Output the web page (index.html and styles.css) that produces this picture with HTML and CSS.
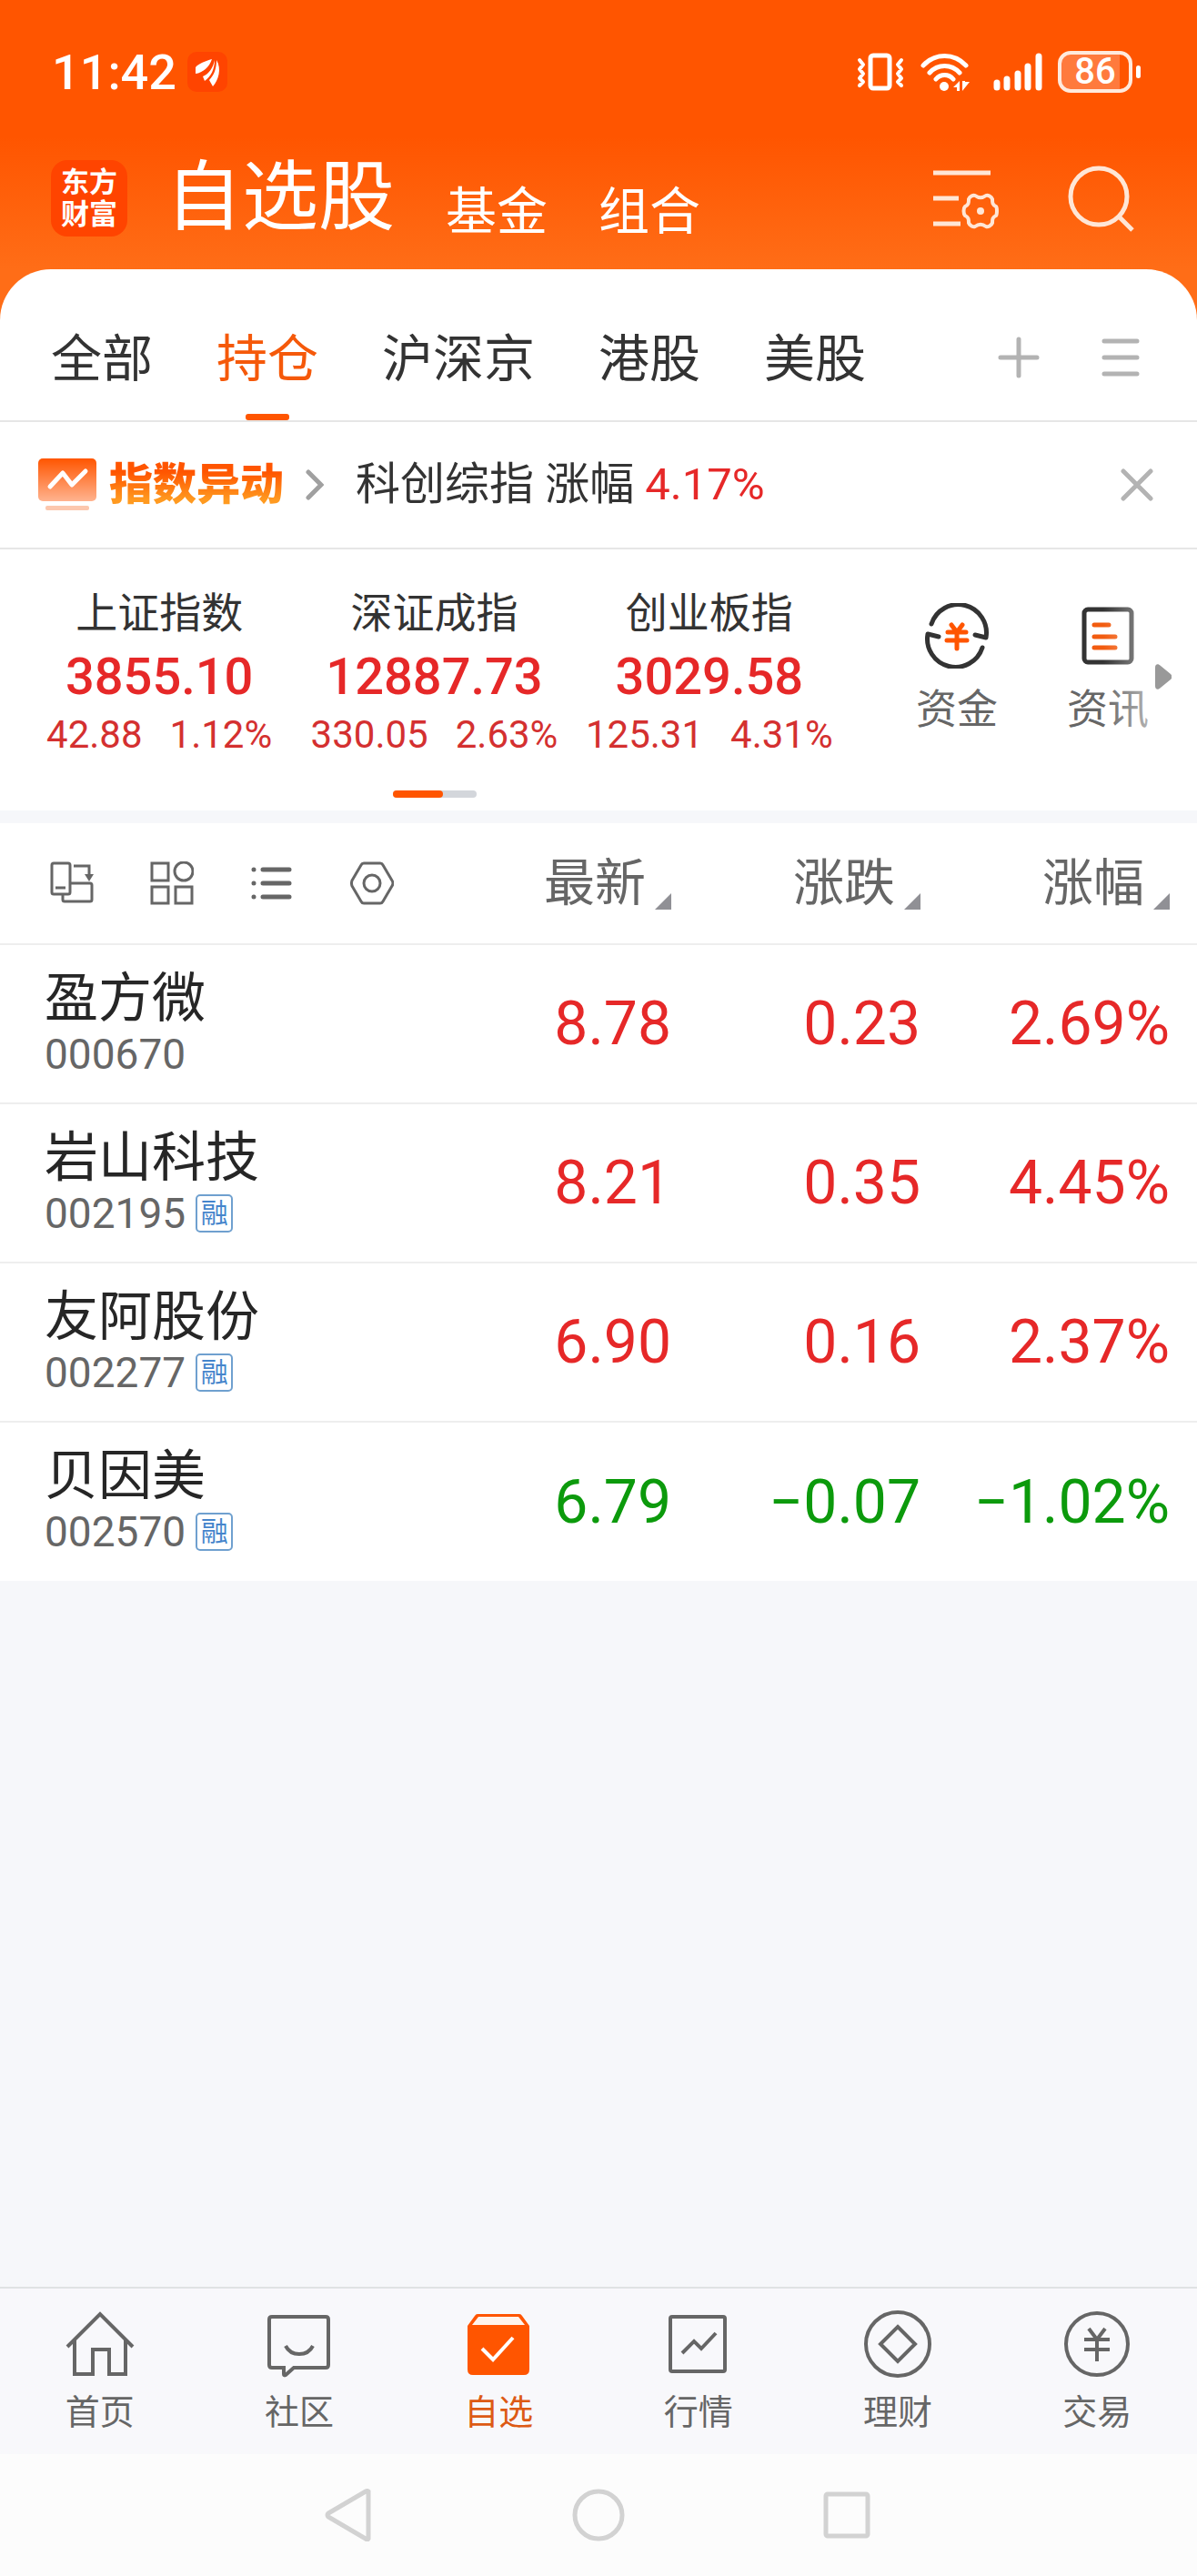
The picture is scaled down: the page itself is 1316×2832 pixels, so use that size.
FILE: index.html
```html
<!DOCTYPE html>
<html lang="zh-CN">
<head>
  <meta charset="UTF-8" />
  <meta name="viewport" content="width=device-width, initial-scale=1.0">
  <title>自选股</title>
  <link rel="stylesheet" href="styles.css">
</head>
<body>

<header class="top">
  <div class="status">
    <span class="time">11:42</span>
    <svg class="app-mark" width="44" height="44" viewBox="0 0 44 44">
      <rect width="44" height="44" rx="10" fill="#ff4400"/>
      <path fill="#fff" d="M27 8C20 10 12 13 9 17v7c8-1 15-7 18-16zM30 9c-2 9-6 15-13 18l2 5c7-5 11-13 11-23zM32 9c0 10-3 17-8 22l4 7c6-7 10-19 4-29z"/>
    </svg>
    <div class="status-icons">
      <svg width="52" height="44" viewBox="0 0 52 44" fill="none" stroke="#fff" stroke-width="5" stroke-linecap="round" stroke-linejoin="round">
        <rect x="15" y="4" width="21" height="36" rx="3"/>
        <path stroke-width="4" d="M3 9l4 5-4 5 4 5-4 5 4 4-4 4M49 9l-4 5 4 5-4 5 4 5-4 4 4 4"/>
      </svg>
      <svg width="56" height="44" viewBox="0 0 56 44" fill="none" stroke="#fff" stroke-width="5" stroke-linecap="round">
        <path d="M4 15c13-14 34-14 47 0M11 23c9-10 24-10 33 0M18 30c5-6 14-6 19 0"/>
        <circle cx="27" cy="38" r="5" fill="#fff" stroke="none"/>
        <path fill="#fff" stroke="none" d="M44 32v11h-3v-4h-4zM47 32v11l8-10h-5v-1z"/>
      </svg>
      <svg class="signal" width="54" height="44" viewBox="0 0 54 44" stroke="#fff" stroke-width="7" stroke-linecap="round">
        <path d="M4 34v5M15 30v9M27 24v15M38 16v23M50 5v34"/>
      </svg>
      <span class="battery">86</span>
    </div>
  </div>

  <div class="app-bar">
    <div class="logo">东方<br>财富</div>
    <nav class="sections">
      <a class="current" href="#">自选股</a>
      <a href="#">基金</a>
      <a href="#">组合</a>
    </nav>
    <button class="icon-btn" aria-label="管理">
      <svg width="74" height="72" viewBox="0 0 74 72" fill="none" stroke="#ffe6d6" stroke-width="5" stroke-linejoin="round">
        <path d="M0 8h63M0 36h28M0 64h30"/>
        <path stroke-width="4" d="M70 50c0 3 0 4-1 5-4 2-4 4-4 8-1 3-5 5-7 4-4-3-8-3-12 0-2 1-6-1-7-4 0-4 0-6-4-8-2-2-2-8 0-10 4-2 4-4 4-8 1-3 5-5 7-4 4 3 8 3 12 0 2-1 6 1 7 4 0 4 0 6 4 8 1 1 1 2 1 5z"/>
        <circle cx="52" cy="50" r="4" fill="#ffe6d6" stroke="none"/>
      </svg>
    </button>
    <button class="icon-btn" aria-label="搜索">
      <svg width="74" height="74" viewBox="0 0 74 74" fill="none" stroke="#ffe6d6" stroke-width="5">
        <circle cx="34" cy="35" r="31"/>
        <path d="M56 57l15 15"/>
      </svg>
    </button>
  </div>

  <div class="tabs">
    <nav>
      <a href="#">全部</a>
      <a class="active" href="#">持仓</a>
      <a href="#">沪深京</a>
      <a href="#">港股</a>
      <a href="#">美股</a>
    </nav>
    <button class="icon-btn" aria-label="添加">
      <svg width="46" height="46" viewBox="0 0 46 46" stroke="#b3b3b3" stroke-width="5" stroke-linecap="round"><path d="M3 23h40M23 3v40"/></svg>
    </button>
    <button class="icon-btn" aria-label="菜单">
      <svg width="42" height="46" viewBox="0 0 42 46" stroke="#b3b3b3" stroke-width="5" stroke-linecap="round"><path d="M3 5h36M3 23h36M3 41h36"/></svg>
    </button>
  </div>
</header>

<section class="notice">
  <svg width="64" height="58" viewBox="0 0 64 58">
    <defs>
      <linearGradient id="card" x1="0" y1="0" x2="0" y2="1">
        <stop offset="0" stop-color="#ff5500"/>
        <stop offset="1" stop-color="#ffb38f"/>
      </linearGradient>
    </defs>
    <rect width="64" height="47" rx="5" fill="url(#card)"/>
    <path d="M13 31l14-15 10 13 15-15" fill="none" stroke="#fff" stroke-width="5" stroke-linecap="round" stroke-linejoin="round"/>
    <rect x="8" y="52" width="48" height="5" rx="2" fill="#fcc7ad"/>
  </svg>
  <strong>指数异动</strong>
  <svg class="chevron" width="20" height="34" viewBox="0 0 20 34" fill="none" stroke="#a0a0a0" stroke-width="5" stroke-linecap="round"><path d="M3 3l14 14L3 31"/></svg>
  <p>科创综指 涨幅 <span class="up">4.17%</span></p>
  <button class="icon-btn" aria-label="关闭">
    <svg width="36" height="36" viewBox="0 0 36 36" stroke="#b3b3b3" stroke-width="5" stroke-linecap="round"><path d="M3 3l30 30M33 3L3 33"/></svg>
  </button>
</section>

<section class="market">
  <div class="indices">
    <div class="index">
      <h2>上证指数</h2>
      <b>3855.10</b>
      <p><span>42.88</span><span>1.12%</span></p>
    </div>
    <div class="index">
      <h2>深证成指</h2>
      <b>12887.73</b>
      <p><span>330.05</span><span>2.63%</span></p>
    </div>
    <div class="index">
      <h2>创业板指</h2>
      <b>3029.58</b>
      <p><span>125.31</span><span>4.31%</span></p>
    </div>
    <div class="pager"><i></i></div>
  </div>
  <div class="shortcuts">
    <a href="#">
      <svg width="72" height="72" viewBox="-36 -36 72 72" fill="none" stroke="#333" stroke-width="5" stroke-linecap="round" stroke-linejoin="round">
        <path d="M-28-13A31 31 0 0 1 32 2L20-1M28 13A31 31 0 0 1-32-2L-20 1"/>
        <path stroke="#ff5500" d="M-6-12l6 8 6-8M-10-4h20M-11 5h22M0-4v18"/>
      </svg>
      资金
    </a>
    <a href="#">
      <svg width="72" height="72" viewBox="-36 -36 72 72" fill="none" stroke="#333" stroke-width="5" stroke-linecap="round">
        <rect x="-26" y="-29" width="52" height="58" rx="4"/>
        <path stroke="#f25c10" d="M-15-12H1M-15 1H8M-15 13H8"/>
      </svg>
      资讯
    </a>
  </div>
  <svg class="more" width="18" height="28" viewBox="0 0 18 28"><path fill="#999" d="M0 4c0-4 3-5 6-2l11 9c2 2 2 4 0 6L6 26c-3 3-6 2-6-2z"/></svg>
</section>

<main>
  <table class="quotes">
    <thead>
      <tr>
        <th>
          <div class="tools">
            <button class="icon-btn" aria-label="横屏">
              <svg width="48" height="48" viewBox="0 0 48 48" fill="none" stroke="#666" stroke-width="3">
                <rect x="2" y="2" width="20" height="34" rx="2"/><path d="M6 29h11M26 5h17v12M14 37v5q0 2 2 2h28q2 0 2-2V26q0-2-2-2H23"/>
                <path fill="#666" stroke="none" d="M38 14h10l-5 8z"/>
              </svg>
            </button>
            <button class="icon-btn" aria-label="宫格">
              <svg width="48" height="48" viewBox="0 0 48 48" fill="none" stroke="#666" stroke-width="3">
                <rect x="2" y="2" width="18" height="19"/><circle cx="37" cy="11" r="10"/><rect x="2" y="28" width="18" height="18"/><rect x="28" y="28" width="18" height="18"/>
              </svg>
            </button>
            <button class="icon-btn" aria-label="列表">
              <svg width="48" height="48" viewBox="0 0 48 48" stroke="#666" stroke-width="5" stroke-linecap="round">
                <path d="M4 9h0M4 24h0M4 39h0M14 9h29M14 24h29M14 39h29"/>
              </svg>
            </button>
            <button class="icon-btn" aria-label="设置">
              <svg width="48" height="48" viewBox="0 0 48 48" fill="none" stroke="#666" stroke-width="3" stroke-linejoin="round">
                <path d="M15 2h18q2 0 3 2l10 17q2 3 0 6L36 44q-1 2-3 2H15q-2 0-3-2L2 27q-1-3 0-6L12 4q1-2 3-2z"/><circle cx="24" cy="24" r="9"/>
              </svg>
            </button>
          </div>
        </th>
        <th class="num"><button class="sort">最新</button></th>
        <th class="num"><button class="sort">涨跌</button></th>
        <th class="num last"><button class="sort">涨幅</button></th>
      </tr>
    </thead>
    <tbody>
      <tr>
        <td><div class="name">盈方微</div><div class="code">000670</div></td>
        <td class="num up">8.78</td><td class="num up">0.23</td><td class="num last up">2.69%</td>
      </tr>
      <tr>
        <td><div class="name">岩山科技</div><div class="code">002195<span class="tag">融</span></div></td>
        <td class="num up">8.21</td><td class="num up">0.35</td><td class="num last up">4.45%</td>
      </tr>
      <tr>
        <td><div class="name">友阿股份</div><div class="code">002277<span class="tag">融</span></div></td>
        <td class="num up">6.90</td><td class="num up">0.16</td><td class="num last up">2.37%</td>
      </tr>
      <tr>
        <td><div class="name">贝因美</div><div class="code">002570<span class="tag">融</span></div></td>
        <td class="num down">6.79</td><td class="num down">−0.07</td><td class="num last down">−1.02%</td>
      </tr>
    </tbody>
  </table>
</main>

<nav class="tab-bar">
  <a href="#">
    <svg width="76" height="76" viewBox="0 0 76 76"><path d="M2 41L38 5l36 36M10 34v37h20V44h18v27h18V34"/></svg>
    首页
  </a>
  <a href="#">
    <svg width="76" height="76" viewBox="0 0 76 76"><path d="M8 8h59q3 0 3 3v50q0 3-3 3H32l-9 8q-2 1-2-1v-7H8q-3 0-3-3V11q0-3 3-3z"/><path d="M23 40c6 12 24 12 30 0"/></svg>
    社区
  </a>
  <a class="active" href="#">
    <svg width="76" height="76" viewBox="0 0 76 76"><path fill="#ff5500" stroke="none" d="M15 5h46q2 0 3 2l8 11v48q0 6-6 6H10q-6 0-6-6V18l8-11q1-2 3-2z"/><path fill="#fff4ec" stroke="none" d="M16 8h44l7 9H9z"/><path stroke="#fff" d="M20 43l12 12 22-24"/></svg>
    自选
  </a>
  <a href="#">
    <svg width="76" height="76" viewBox="0 0 76 76"><rect x="7" y="8" width="60" height="60" rx="2"/><path d="M20 48l13-13 8 8 16-17"/></svg>
    行情
  </a>
  <a href="#">
    <svg width="76" height="76" viewBox="0 0 76 76"><circle cx="38" cy="38" r="35"/><path d="M38 19l19 19-19 19-19-19z"/></svg>
    理财
  </a>
  <a href="#">
    <svg width="76" height="76" viewBox="0 0 76 76"><circle cx="38" cy="38" r="34"/><path d="M29 21l9 12 9-12M24 33h28M24 44h28M38 33v24"/></svg>
    交易
  </a>
</nav>

<div class="system-nav">
  <button class="icon-btn" aria-label="返回">
    <svg width="58" height="58" viewBox="0 0 58 58"><path d="M49 3v52q-1 2-3 0L5 31q-2-2 0-4L46 3q2-1 3 0z"/></svg>
  </button>
  <button class="icon-btn" aria-label="主屏幕">
    <svg width="58" height="58" viewBox="0 0 58 58"><circle cx="29" cy="29" r="26"/></svg>
  </button>
  <button class="icon-btn" aria-label="最近任务">
    <svg width="58" height="58" viewBox="0 0 58 58"><rect x="6" y="6" width="46" height="46" rx="2"/></svg>
  </button>
</div>

</body>
</html>
```
FILE: styles.css
```css
* { margin: 0; padding: 0; box-sizing: border-box; }

body {
  min-height: 100vh;
  display: flex;
  flex-direction: column;
  background: #f6f7fa;
  color: #333;
  font-family: Roboto, "Noto Sans CJK SC", sans-serif;
}

a { color: inherit; text-decoration: none; }
svg { display: block; flex: none; }
button {
  border: none;
  background: none;
  color: inherit;
  font: inherit;
  cursor: pointer;
}
.icon-btn { flex: none; }

.up { color: #e62828; }
.down { color: #0c9a0c; }

/* header */
.top { background: linear-gradient(#ff5500 150px, #ff6d17 296px); }

.status {
  height: 158px;
  padding: 0 62px 0 57px;
  display: flex;
  align-items: center;
  color: #fff;
}
.time {
  font-size: 54px;
  font-weight: 500;
}
.app-mark { margin-left: 12px; }
.status-icons {
  margin-left: auto;
  display: flex;
  align-items: center;
  gap: 17px;
}
.signal { margin-left: 8px; }
.battery {
  position: relative;
  width: 82px;
  height: 46px;
  margin-right: 9px;
  border: 4px solid #ffeadd;
  border-radius: 14px;
  background: linear-gradient(90deg, #ff7a3d 86%, #ff5500 86%);
  font-size: 40px;
  font-weight: 500;
  line-height: 38px;
  text-align: center;
}
.battery::after {
  content: "";
  position: absolute;
  right: -13px;
  top: 12px;
  width: 5px;
  height: 14px;
  border-radius: 3px;
  background: #fff;
}

.app-bar {
  padding: 12px 68px 30px 56px;
  display: flex;
  align-items: center;
  color: #fff;
}
.logo {
  width: 84px;
  height: 84px;
  padding-top: 7px;
  border-radius: 18px;
  background: #ff4400;
  font-size: 31px;
  font-weight: 700;
  line-height: 35px;
  text-align: center;
}
.sections {
  flex: 1;
  margin-left: 42px;
  display: flex;
  align-items: flex-end;
  gap: 56px;
  font-size: 56px;
  line-height: 66px;
}
.sections .current {
  font-size: 84px;
  line-height: 96px;
}
.app-bar .icon-btn + .icon-btn { margin-left: 74px; }

.tabs {
  height: 168px;
  padding: 28px 63px 0 56px;
  display: flex;
  align-items: center;
  border-bottom: 2px solid #e6e6e6;
  border-radius: 56px 56px 0 0;
  background: #fff;
}
.tabs nav {
  flex: 1;
  align-self: stretch;
  display: flex;
  gap: 70px;
  font-size: 56px;
  line-height: 142px;
}
.tabs .active {
  position: relative;
  color: #f5590a;
}
.tabs .active::after {
  content: "";
  position: absolute;
  left: 50%;
  bottom: 0;
  width: 48px;
  height: 7px;
  margin-left: -24px;
  border-radius: 3px;
  background: #ff5500;
}
.tabs .icon-btn + .icon-btn { margin-left: 68px; }

/* notice */
.notice {
  height: 140px;
  padding: 0 48px 0 42px;
  display: flex;
  align-items: center;
  border-bottom: 2px solid #e6e6e6;
  background: #fff;
  font-size: 49px;
  line-height: 56px;
}
.notice strong {
  margin-left: 14px;
  font-size: 48px;
  font-weight: 900;
  background: linear-gradient(#ff5500 25%, #ff9a20 80%);
  -webkit-background-clip: text;
  background-clip: text;
  color: transparent;
}
.chevron { margin: 0 35px 0 24px; }
.notice p { flex: 1; }

/* indices */
.market {
  position: relative;
  padding: 0 15px 14px 24px;
  display: flex;
  gap: 38px;
  background: #fff;
}
.indices {
  flex: 1;
  padding-top: 40px;
  display: grid;
  grid-template-columns: repeat(3, 1fr);
  text-align: center;
}
.index h2 {
  font-size: 46px;
  font-weight: 400;
  line-height: 60px;
}
.index b {
  display: block;
  color: #e62828;
  font-size: 56px;
  font-weight: 500;
  line-height: 80px;
}
.index p {
  display: flex;
  justify-content: center;
  gap: 30px;
  color: #d43030;
  font-size: 42px;
  line-height: 48px;
}
.pager {
  grid-column: 1 / -1;
  justify-self: center;
  width: 92px;
  height: 8px;
  margin-top: 37px;
  border-radius: 4px;
  background: #d3d6db;
}
.pager i {
  display: block;
  width: 60%;
  height: 100%;
  border-radius: 4px;
  background: #ff5500;
}
.shortcuts {
  position: relative;
  padding-top: 59px;
  display: flex;
  color: #666;
  font-size: 45px;
  line-height: 56px;
}
.shortcuts a {
  width: 166px;
  display: flex;
  flex-direction: column;
  align-items: center;
  gap: 18px;
}
.shortcuts::after {
  content: "";
  position: absolute;
  top: 0;
  right: 28px;
  bottom: 0;
  width: 60px;
  background: linear-gradient(90deg, rgba(255,255,255,0), rgba(255,255,255,.6));
}
.more {
  position: absolute;
  right: 28px;
  top: 126px;
}

/* quotes */
main {
  flex: 1;
  padding-top: 14px;
}
.quotes {
  width: 100%;
  border-collapse: collapse;
  table-layout: fixed;
  background: #fff;
}
.quotes tr { height: 175px; }
.quotes tr + tr { border-top: 2px solid #eee; }
.quotes thead tr {
  height: 133px;
  border-bottom: 2px solid #eee;
}
.quotes th {
  font-weight: 400;
  color: #666;
}
.quotes td:first-child { padding-left: 49px; }
.quotes .num {
  width: 274px;
  text-align: right;
  font-size: 66px;
}
.quotes th.num {
  font-size: 56px;
  line-height: 66px;
}
.quotes .num.last {
  width: 304px;
  padding-right: 30px;
}
.tools {
  padding-left: 55px;
  display: flex;
  gap: 62px;
}
.sort { vertical-align: top; }
.sort::after {
  content: "";
  display: inline-block;
  margin-left: 10px;
  border-left: 18px solid transparent;
  border-bottom: 18px solid #909095;
  vertical-align: -10px;
}
.name {
  color: #262626;
  font-size: 59px;
  line-height: 66px;
}
.code {
  display: flex;
  align-items: center;
  gap: 11px;
  color: #666;
  font-size: 46px;
  line-height: 56px;
}
.tag {
  width: 41px;
  height: 42px;
  border: 2px solid #6fa0cf;
  border-radius: 5px;
  color: #4585cc;
  font-size: 30px;
  line-height: 38px;
  text-align: center;
}

/* bottom bars */
.tab-bar {
  display: flex;
  padding: 23px 0 24px;
  border-top: 2px solid #e0e2e4;
  background: #f8f8fb;
  color: #666;
  font-size: 38px;
  line-height: 44px;
}
.tab-bar a {
  flex: 1;
  display: flex;
  flex-direction: column;
  align-items: center;
  gap: 15px;
}
.tab-bar svg {
  fill: none;
  stroke: #666;
  stroke-width: 4;
}
.tab-bar .active { color: #dd5a14; }

.system-nav {
  height: 134px;
  display: flex;
  align-items: center;
  justify-content: center;
  gap: 215px;
  background: #fcfcfc;
}
.system-nav svg {
  fill: none;
  stroke: #d2d2d2;
  stroke-width: 5;
}
```
